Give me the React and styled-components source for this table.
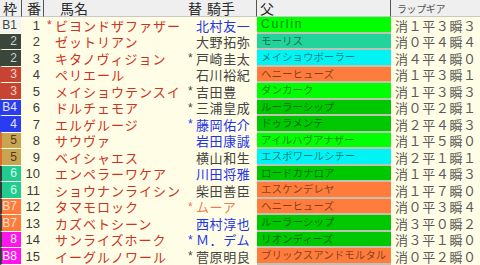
import React from 'react'
import styled, { createGlobalStyle } from 'styled-components'

const GlobalStyle = createGlobalStyle`
  html, body {
    margin: 0;
    padding: 0;
    background: #fffde6;
  }
  body {
    font-family: "Noto Sans CJK JP", "Noto Sans", sans-serif;
  }
`

const FRAMES = {
  1: { bg: '#f4f4ee', fg: '#444444', stripe: '#f4f4ee' },
  2: { bg: '#3a463a', fg: '#cfcfcf', stripe: '#3a463a' },
  3: { bg: '#c84432', fg: '#ffd6c6', stripe: '#c84432' },
  4: { bg: '#2a3cf0', fg: '#e4e6ff', stripe: '#2a3cf0' },
  5: { bg: '#c9a552', fg: '#4a3a22', stripe: '#e0682a' },
  6: { bg: '#22cc90', fg: '#dcfff0', stripe: '#333833' },
  7: { bg: '#ff7a3c', fg: '#ffe2cc', stripe: '#4a3a30' },
  8: { bg: '#ff14ee', fg: '#ffffff', stripe: '#3a3a3a' },
}

const SIRE = {
  lime: '#00ff00',
  green: '#00c800',
  teal: '#22d49a',
  cyan: '#00f4f4',
  orange: '#ff7c3c',
}

const JOCKEY = {
  blue: '#2233ee',
  gray: '#444444',
  orange: '#f07a52',
}

const rows = [
  { w: 1, f: 'B1', n: 1, hs: true, name: 'ビヨンドザファザー', jockey: '北村友一', jc: 'blue', sire: 'Curlin', sc: 'lime', gear: '消１平３瞬３' },
  { w: 2, f: '2', n: 2, name: 'ゼットリアン', jockey: '大野拓弥', jc: 'gray', sire: 'モーリス', sc: 'teal', gear: '消０平４瞬４' },
  { w: 2, f: '2', n: 3, name: 'キタノヴィジョン', js: true, jockey: '戸崎圭太', jc: 'gray', sire: 'メイショウボーラー', sc: 'cyan', gear: '消４平４瞬０' },
  { w: 3, f: '3', n: 4, name: 'ペリエール', jockey: '石川裕紀', jc: 'gray', sire: 'ヘニーヒューズ', sc: 'orange', gear: '消１平３瞬１' },
  { w: 3, f: '3', n: 5, name: 'メイショウテンスイ', js: true, jockey: '吉田豊', jc: 'gray', sire: 'ダンカーク', sc: 'lime', gear: '消１平３瞬３' },
  { w: 4, f: 'B4', n: 6, name: 'ドルチェモア', js: true, jockey: '三浦皇成', jc: 'gray', sire: 'ルーラーシップ', sc: 'green', gear: '消０平２瞬１' },
  { w: 4, f: '4', n: 7, name: 'エルゲルージ', js: true, jockey: '藤岡佑介', jc: 'blue', sire: 'ドゥラメンテ', sc: 'green', gear: '消２平４瞬３' },
  { w: 5, f: '5', n: 8, name: 'サウヴァ', jockey: '岩田康誠', jc: 'blue', sire: 'アイルハヴアナザー', sc: 'lime', gear: '消１平５瞬０' },
  { w: 5, f: '5', n: 9, name: 'ベイシャエス', jockey: '横山和生', jc: 'gray', sire: 'エスポワールシチー', sc: 'cyan', gear: '消２平１瞬１' },
  { w: 6, f: '6', n: 10, name: 'エンペラーワケア', jockey: '川田将雅', jc: 'blue', sire: 'ロードカナロア', sc: 'green', gear: '消１平４瞬３' },
  { w: 6, f: '6', n: 11, name: 'ショウナンライシン', jockey: '柴田善臣', jc: 'gray', sire: 'エスケンデレヤ', sc: 'orange', gear: '消１平７瞬０' },
  { w: 7, f: 'B7', n: 12, name: 'タマモロック', js: true, jockey: 'ムーア', jc: 'orange', sire: 'ヘニーヒューズ', sc: 'orange', gear: '消０平３瞬４' },
  { w: 7, f: 'B7', n: 13, name: 'カズベトシーン', jockey: '西村淳也', jc: 'blue', sire: 'ルーラーシップ', sc: 'green', gear: '消３平０瞬２' },
  { w: 8, f: '8', n: 14, name: 'サンライズホーク', js: true, jockey: 'Ｍ．デム', jc: 'blue', sire: 'リオンディーズ', sc: 'green', gear: '消３平１瞬０' },
  { w: 8, f: 'B8', n: 15, name: 'イーグルノワール', js: true, jockey: '菅原明良', jc: 'gray', sire: 'ブリックスアンドモルタル', sc: 'orange', gear: '消０平２瞬０' },
]

const Table = styled.div`
  display: grid;
  grid-template-columns: 22px 22px 142px 71px 134px 89px;
  grid-template-rows: 17px;
  grid-auto-rows: 16.5px;
  width: 480px;
  height: 265px;
  overflow: hidden;
  background: #fffde6;
`

const HeadCell = styled.div`
  display: flex;
  align-items: flex-end;
  gap: 5px;
  box-sizing: border-box;
  padding-left: ${p => p.$pad || 0}px;
  padding-bottom: 1px;
  background: #efefef;
  border-bottom: 1px solid #c8c8c4;
  border-right: ${p => (p.$sep ? '1px solid #555' : 'none')};
  color: #2a2a2a;
  font-size: ${p => p.$size || 14}px;
  letter-spacing: ${p => p.$track || 0}px;
  line-height: 14px;
  white-space: nowrap;
`

const GearHead = styled(HeadCell)`
  color: #555;
  line-height: 12px;
`

const FrameCell = styled.div`
  display: flex;
  align-items: center;
  justify-content: flex-end;
  box-sizing: border-box;
  padding-right: 4px;
  background: ${p => p.$bg};
  color: ${p => p.$fg};
  border-left: 2px solid ${p => p.$stripe};
  border-right: 1px solid #fffde6;
  border-bottom: 1px solid #fffde6;
  font-family: "Liberation Sans", Arial, sans-serif;
  font-size: 12px;
  line-height: 1;
`

const NumCell = styled.div`
  display: flex;
  align-items: center;
  justify-content: flex-end;
  padding-right: 4px;
  color: #3c3c3c;
  font-family: "Liberation Sans", Arial, sans-serif;
  font-size: 13px;
  line-height: 1;
`

const NameCell = styled.div`
  display: flex;
  align-items: center;
  padding-left: 3px;
  color: #cc3322;
  font-size: 13px;
  letter-spacing: 1px;
  line-height: 1;
  white-space: nowrap;
`

const Star = styled.span`
  display: inline-block;
  width: 8px;
  flex: none;
  letter-spacing: 0;
  font-family: "Liberation Sans", Arial, sans-serif;
  font-size: 12px;
  color: ${p => p.$color || 'inherit'};
`

const JockeyCell = styled.div`
  display: flex;
  align-items: center;
  padding-left: 2px;
  color: ${p => p.$color};
  font-size: 13px;
  letter-spacing: 0.6px;
  line-height: 1;
  white-space: nowrap;
`

const SireCell = styled.div`
  display: flex;
  align-items: center;
  box-sizing: border-box;
  padding-left: 4px;
  background: ${p => p.$bg};
  border-bottom: 2px solid #c2c2b2;
  color: rgba(0, 0, 0, 0.5);
  font-size: ${p => (p.$latin ? 12 : 10.5)}px;
  font-family: ${p => (p.$latin ? '"Liberation Sans", Arial, sans-serif' : '"Noto Sans CJK JP", sans-serif')};
  letter-spacing: ${p => (p.$latin ? 1.8 : 0)}px;
  line-height: 1;
  white-space: nowrap;
  overflow: hidden;
`

const GearCell = styled.div`
  display: flex;
  align-items: center;
  padding-left: 4px;
  color: #5a5a5a;
  font-size: 13px;
  letter-spacing: 0.6px;
  line-height: 1;
  white-space: nowrap;
`

function HorseRow({ r }) {
  const fr = FRAMES[r.w]
  const jc = JOCKEY[r.jc]
  return (
    <>
      <FrameCell $bg={fr.bg} $fg={fr.fg} $stripe={fr.stripe}>{r.f}</FrameCell>
      <NumCell>{r.n}</NumCell>
      <NameCell>
        {r.hs && <Star>*</Star>}
        {!r.hs && <Star />}
        <span>{r.name}</span>
      </NameCell>
      <JockeyCell $color={jc}>
        {r.js ? <Star $color={jc}>*</Star> : <Star />}
        <span>{r.jockey}</span>
      </JockeyCell>
      <SireCell $bg={SIRE[r.sc]} $latin={/^[A-Za-z]/.test(r.sire)}>{r.sire}</SireCell>
      <GearCell>{r.gear}</GearCell>
    </>
  )
}

export default function App() {
  return (
    <>
      <GlobalStyle />
      <Table>
        <HeadCell $pad={3} $sep>枠</HeadCell>
        <HeadCell $pad={5} $sep>番</HeadCell>
        <HeadCell $pad={16}>馬名</HeadCell>
        <HeadCell $pad={2} $sep>
          <span>替</span>
          <span>騎手</span>
        </HeadCell>
        <HeadCell $pad={3} $sep>父</HeadCell>
        <GearHead $pad={6} $size={10} $track={-0.4}>ラップギア</GearHead>
        {rows.map(r => (
          <HorseRow key={r.n} r={r} />
        ))}
      </Table>
    </>
  )
}
